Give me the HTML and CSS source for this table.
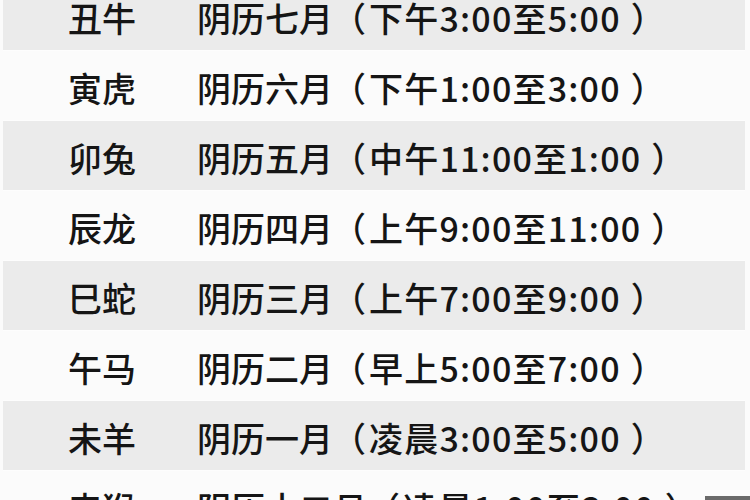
FILE: index.html
```html
<!DOCTYPE html>
<html lang="zh-CN">
<head>
<meta charset="utf-8">
<title>十二生肖对应时辰</title>
<link rel="stylesheet" href="styles.css">
</head>
<body>
<div class="page">
  <div class="table">
    <div class="row shade"><span class="animal">丑牛</span><span class="time">阴历七月<span class="po">（</span><span class="hours">下午3:00至5:00</span><span class="pc">）</span></span></div>
    <div class="row"><span class="animal">寅虎</span><span class="time">阴历六月<span class="po">（</span><span class="hours">下午1:00至3:00</span><span class="pc">）</span></span></div>
    <div class="row shade"><span class="animal">卯兔</span><span class="time">阴历五月<span class="po">（</span><span class="hours">中午11:00至1:00</span><span class="pc">）</span></span></div>
    <div class="row"><span class="animal">辰龙</span><span class="time">阴历四月<span class="po">（</span><span class="hours">上午9:00至11:00</span><span class="pc">）</span></span></div>
    <div class="row shade"><span class="animal">巳蛇</span><span class="time">阴历三月<span class="po">（</span><span class="hours">上午7:00至9:00</span><span class="pc">）</span></span></div>
    <div class="row"><span class="animal">午马</span><span class="time">阴历二月<span class="po">（</span><span class="hours">早上5:00至7:00</span><span class="pc">）</span></span></div>
    <div class="row shade"><span class="animal">未羊</span><span class="time">阴历一月<span class="po">（</span><span class="hours">凌晨3:00至5:00</span><span class="pc">）</span></span></div>
    <div class="row"><span class="animal">申猴</span><span class="time">阴历十二月<span class="po">（</span><span class="hours">凌晨1:00至3:00</span><span class="pc">）</span></span></div>
  </div>
  <div class="mark"></div>
</div>
</body>
</html>
```
FILE: styles.css
```css
html, body {
  margin: 0;
  padding: 0;
  background: #fbfbfb;
}
.page {
  position: relative;
  width: 750px;
  height: 500px;
  overflow: hidden;
  background: #fbfbfb;
}
.table {
  margin: -19px 5px 0 3px;
  display: flex;
  flex-direction: column;
}
.row {
  height: 70px;
  flex: none;
  display: grid;
  grid-template-columns: 129px 1fr;
  align-items: center;
  padding: 4px 0 0 65px;
  box-sizing: border-box;
  font-family: "Noto Sans CJK SC", "Noto Sans", sans-serif;
  font-size: 34px;
  font-weight: 500;
  color: #151515;
  background: #fbfbfb;
  border-bottom: 1px solid #fdfdfd;
}
.row.shade {
  background: #ebebeb;
}
.animal, .time {
  white-space: nowrap;
}
.po {
  margin-left: -1px;
  margin-right: 3px;
}
.hours {
  letter-spacing: 1.2px;
}
.pc {
  margin-left: 10px;
}
.mark {
  position: absolute;
  right: 0;
  bottom: 0;
  width: 45px;
  height: 4px;
  background: #6a6a6a;
}
```
